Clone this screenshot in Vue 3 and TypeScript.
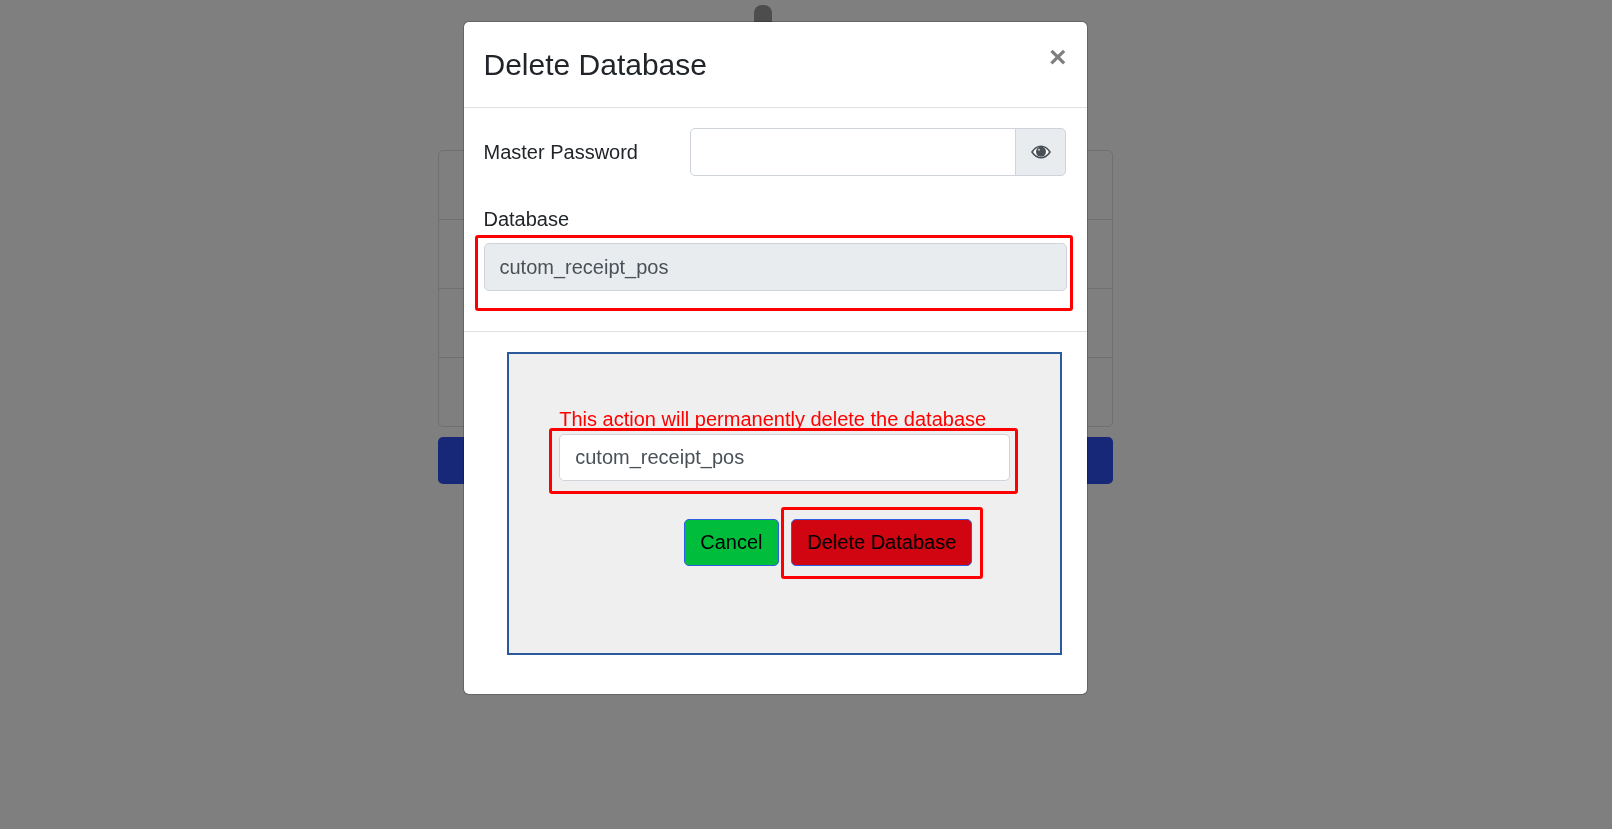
<template>
  <div class="page">
    <div class="logo"></div>
    <div class="list-card">
      <div v-for="n in 4" :key="n" class="list-row"></div>
    </div>
    <div class="create-btn"></div>

    <div class="backdrop"></div>

    <div class="modal">
      <div class="modal-header">
        <h4 class="modal-title">{{ title }}</h4>
        <button class="close-btn" type="button">×</button>
      </div>

      <div class="modal-body">
        <div class="password-row">
          <label class="field-label">Master Password</label>
          <div class="input-group">
            <input class="form-input group-input" type="password" />
            <span class="addon">
              <svg width="20" height="14" viewBox="0 0 20 14">
                <path d="M1 7C3.5 3.2 6.5 1.3 10 1.3S16.5 3.2 19 7C16.5 10.8 13.5 12.7 10 12.7S3.5 10.8 1 7Z" fill="#fff" stroke="#495057" stroke-width="1.6" />
                <circle cx="10" cy="6.8" r="5" fill="#495057" />
                <circle cx="8" cy="4.8" r="1" fill="#c9ced3" />
              </svg>
            </span>
          </div>
        </div>

        <label class="field-label db-label">Database</label>
        <div class="db-field">
          <input class="form-input db-input" type="text" :value="dbName" disabled />
          <span class="mark mark-db"></span>
        </div>
      </div>

      <div class="modal-footer">
        <div class="confirm-box">
          <p class="warning">This action will permanently delete the database</p>
          <div class="confirm-field">
            <input class="form-input confirm-input" type="text" :value="dbName" />
            <span class="mark mark-confirm"></span>
          </div>
          <div class="actions">
            <button class="btn btn-cancel" type="button">Cancel</button>
            <div class="delete-wrap">
              <button class="btn btn-delete" type="button">{{ title }}</button>
              <span class="mark mark-delete"></span>
            </div>
          </div>
        </div>
      </div>
    </div>
  </div>
</template>

<script setup lang="ts">
const title = "Delete Database";
const dbName = "cutom_receipt_pos";
</script>

<style>
html,
body {
  margin: 0;
  overflow: hidden;
  background: #fff;
}
</style>

<style scoped>
.page {
  width: 1612px;
  height: 829px;
  box-sizing: border-box;
  padding-top: 5px;
  overflow: hidden;
  font-family: "Liberation Sans", Arial, sans-serif;
  font-size: 20px;
  color: #212529;
}

.logo {
  width: 18px;
  height: 40px;
  margin-left: 754px;
  border-radius: 8px;
  background: #9a9a9a;
}

.list-card {
  width: 675px;
  margin: 105px 0 0 438px;
  border: 1px solid rgba(0, 0, 0, 0.125);
  border-radius: 5px;
  box-sizing: border-box;
}

.list-row {
  height: 68px;
  border-bottom: 1px solid rgba(0, 0, 0, 0.125);
}

.list-row:last-child {
  border-bottom: 0;
}

.create-btn {
  width: 675px;
  height: 47px;
  margin: 10px 0 0 438px;
  border-radius: 5px;
  background: #2e50f0;
}

.backdrop {
  position: fixed;
  inset: 0;
  background: rgba(0, 0, 0, 0.5);
}

.modal {
  position: absolute;
  top: 21px;
  left: 462.5px;
  width: 625px;
  height: 674px;
  box-sizing: border-box;
  background: #fff;
  border: 1px solid rgba(0, 0, 0, 0.2);
  border-radius: 6px;
  background-clip: padding-box;
}

.modal-header {
  display: flex;
  justify-content: space-between;
  align-items: flex-start;
  height: 86px;
  box-sizing: border-box;
  padding: 20px;
  border-bottom: 1px solid #dee2e6;
}

.modal-title {
  margin: 0;
  font-size: 30px;
  font-weight: 400;
  line-height: 45px;
}

.close-btn {
  padding: 0;
  border: 0;
  background: none;
  font-family: inherit;
  font-size: 30px;
  font-weight: 700;
  line-height: 30px;
  color: #000;
  opacity: 0.5;
}

.modal-body {
  padding: 20px 20px 0;
}

.password-row {
  display: flex;
  align-items: center;
  justify-content: space-between;
}

.field-label {
  display: block;
  line-height: 30px;
}

.input-group {
  display: flex;
  width: 376px;
  height: 48px;
  margin-right: 1px;
}

.form-input {
  display: block;
  box-sizing: border-box;
  height: 48px;
  padding: 8px 15px;
  border: 1px solid #ced4da;
  border-radius: 5px;
  background: #fff;
  font-family: inherit;
  font-size: 20px;
  line-height: 30px;
  color: #495057;
  outline: none;
}

.group-input {
  flex: 1;
  min-width: 0;
  border-radius: 5px 0 0 5px;
}

.addon {
  display: flex;
  align-items: center;
  justify-content: center;
  width: 51px;
  margin-left: -1px;
  padding-left: 1px;
  border: 1px solid #ced4da;
  border-radius: 0 5px 5px 0;
  background: #e9ecef;
  box-sizing: border-box;
}

.db-label {
  margin: 28px 0 9px;
}

.db-field {
  position: relative;
  width: 583px;
  margin-bottom: 40px;
}

.db-input {
  width: 100%;
  background: #e9ecef;
  opacity: 1;
}

.mark {
  position: absolute;
  border: 3px solid #f00;
  border-radius: 3px;
  pointer-events: none;
}

.mark-db {
  top: -8px;
  left: -9px;
  right: -6.5px;
  bottom: -20px;
}

.confirm-field {
  position: relative;
}

.mark-confirm {
  top: -6px;
  left: -10.5px;
  right: -8px;
  bottom: -13px;
}

.mark-delete {
  top: -12px;
  left: -10px;
  right: -11px;
  bottom: -13px;
}

.modal-footer {
  padding: 20px 25px 0 43px;
  border-top: 1px solid #dee2e6;
}

.confirm-box {
  height: 303px;
  box-sizing: border-box;
  padding: 50px 50px 50px 50.75px;
  border: 2px solid #2a5a9c;
  background: #efefef;
}

.warning {
  margin: 0;
  line-height: 30px;
  color: #f00;
}

.confirm-input {
  width: 100%;
  height: 47px;
}

.actions {
  display: flex;
  justify-content: flex-end;
  gap: 12px;
  margin: 38px 37.5px 0 0;
}

.delete-wrap {
  position: relative;
}

.btn {
  display: block;
  height: 47px;
  box-sizing: border-box;
  padding: 0 15px;
  border: 1px solid #2f5be6;
  border-radius: 5px;
  font-family: inherit;
  font-size: 20px;
  color: #000;
}

.btn-cancel {
  padding: 0 15.5px;
  background: #00bd3c;
}

.btn-delete {
  background: #d10512;
}
</style>
